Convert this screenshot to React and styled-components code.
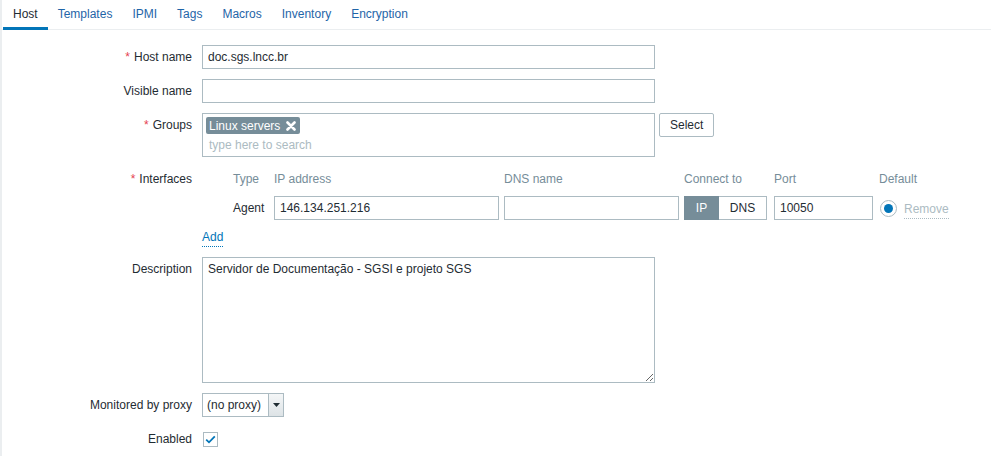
import React from "react";
import styled, { createGlobalStyle } from "styled-components";

const Global = createGlobalStyle`
  html, body { margin: 0; padding: 0; background: #fff; }
  body { font-family: "Liberation Sans", Arial, sans-serif; font-size: 12px; color: #1f2c33; }
  * { box-sizing: border-box; }
`;

const Page = styled.div`
  border-left: 2px solid #ebeef0;
  min-height: 456px;
  background: #fff;
`;

const Tabs = styled.ul`
  display: flex;
  list-style: none;
  margin: 0;
  padding: 0 0 0 1px;
  height: 30px;
  border-bottom: 1px solid #ebeef0;
`;

const Tab = styled.li`
  height: 30px;
  padding: 0 10px;
  line-height: 28px;
  color: ${(p) => (p.$active ? "#1f2c33" : "#1f65a8")};
  border-bottom: 3px solid ${(p) => (p.$active ? "#0275b8" : "transparent")};
  margin-bottom: -1px;
  cursor: pointer;
`;

const Form = styled.div`
  display: flex;
  flex-direction: column;
  gap: 10px;
  padding-top: 15px;
`;

const Row = styled.div`
  display: flex;
  align-items: flex-start;
`;

const Label = styled.div`
  width: 190px;
  margin-right: 10px;
  text-align: right;
  line-height: 24px;
  white-space: nowrap;
`;

const Req = styled.span`
  color: #e54251;
  margin-right: 4px;
`;

const Field = styled.div`
  display: flex;
  align-items: flex-start;
  gap: 4px;
`;

const Input = styled.input`
  width: ${(p) => p.$w}px;
  height: 24px;
  border: 1px solid #acbbc2;
  border-radius: 0;
  padding: 0 5px;
  font: inherit;
  color: #1f2c33;
  background: #fff;
  outline: none;
`;

const Multi = styled.div`
  width: 453px;
  height: 44px;
  border: 1px solid #acbbc2;
  padding: 3px 3px 0 3px;
  display: flex;
  flex-direction: column;
`;

const TagItem = styled.span`
  align-self: flex-start;
  display: inline-flex;
  align-items: center;
  gap: 6px;
  height: 17px;
  padding: 0 4px 0 3px;
  background: #768d99;
  color: #fff;
  border-radius: 2px;
  font-size: 12px;
`;

const Placeholder = styled.span`
  color: #acbbc2;
  line-height: 16px;
  margin-top: 3px;
  padding-left: 3px;
`;

const Button = styled.button`
  height: 24px;
  padding: 0 10px;
  border: 1px solid #acbbc2;
  border-radius: 2px;
  background: #fff;
  color: #1f2c33;
  font: inherit;
  cursor: pointer;
`;

const IfaceGrid = styled.div`
  display: grid;
  grid-template-columns: 31px 41px 230px 180px 90px 105px auto;
  grid-template-rows: 24px 24px;
  row-gap: 5px;
  align-items: center;
`;

const ColHead = styled.div`
  color: #768d99;
  line-height: 24px;
  white-space: nowrap;
`;

const Cell = styled.div`
  display: flex;
  align-items: center;
  white-space: nowrap;
`;

const Toggle = styled.div`
  display: flex;
  width: 83px;
  height: 24px;
  border: 1px solid #acbbc2;
`;

const ToggleOpt = styled.div`
  flex: ${(p) => (p.$active ? "0 0 35px" : "1")};
  display: flex;
  align-items: center;
  justify-content: center;
  background: ${(p) => (p.$active ? "#768d99" : "#fff")};
  color: ${(p) => (p.$active ? "#fff" : "#1f2c33")};
  margin: ${(p) => (p.$active ? "-1px 0 -1px -1px" : "0")};
`;

const Radio = styled.span`
  width: 17px;
  height: 17px;
  border-radius: 50%;
  border: 1px solid #acbbc2;
  display: inline-flex;
  align-items: center;
  justify-content: center;
  margin-left: 1px;
  &::after {
    content: "";
    width: 9px;
    height: 9px;
    border-radius: 50%;
    background: #0275b8;
  }
`;

const LinkText = styled.span`
  color: ${(p) => (p.$muted ? "#acbbc2" : "#0275b8")};
  border-bottom: 1px dotted ${(p) => (p.$muted ? "#acbbc2" : "#0275b8")};
  line-height: 14px;
  padding-bottom: 2px;
  cursor: pointer;
`;

const RemoveWrap = styled.span`
  margin-left: 7px;
  padding-top: 2px;
`;

const AddBlock = styled.div`
  padding-top: 9px;
  height: 27px;
  line-height: 16px;
`;

const Textarea = styled.textarea`
  width: 453px;
  height: 126px;
  border: 1px solid #acbbc2;
  border-radius: 0;
  padding: 4px 5px;
  font: inherit;
  color: #1f2c33;
  resize: both;
  outline: none;
  display: block;
`;

const SelectBox = styled.div`
  width: 82px;
  height: 24px;
  border: 1px solid #acbbc2;
  display: flex;
  align-items: stretch;
  background: #fff;
`;

const SelectText = styled.span`
  flex: 1;
  padding-left: 4px;
  line-height: 22px;
`;

const SelectArrow = styled.span`
  width: 15px;
  border-left: 1px solid #acbbc2;
  background: linear-gradient(#f4f6f7, #dde3e6);
  display: flex;
  align-items: center;
  justify-content: center;
`;

const CheckWrap = styled.div`
  height: 24px;
  display: flex;
  align-items: center;
  padding-left: 1px;
`;

const Check = styled.span`
  width: 15px;
  height: 15px;
  border: 1px solid #acbbc2;
  background: #fff;
  display: inline-flex;
  align-items: center;
  justify-content: center;
`;

const Cross = () => (
  <svg width="10" height="10" viewBox="0 0 10 10">
    <path d="M1.5 1.5 L8.5 8.5 M8.5 1.5 L1.5 8.5" stroke="#fff" strokeWidth="2.6" strokeLinecap="round" />
  </svg>
);

const tabs = ["Host", "Templates", "IPMI", "Tags", "Macros", "Inventory", "Encryption"];

export default function App() {
  return (
    <Page>
      <Global />
      <Tabs>
        {tabs.map((t, i) => (
          <Tab key={t} $active={i === 0}>{t}</Tab>
        ))}
      </Tabs>
      <Form>
        <Row>
          <Label><Req>*</Req>Host name</Label>
          <Field><Input $w={453} defaultValue="doc.sgs.lncc.br" /></Field>
        </Row>
        <Row>
          <Label>Visible name</Label>
          <Field><Input $w={453} defaultValue="" /></Field>
        </Row>
        <Row>
          <Label><Req>*</Req>Groups</Label>
          <Field>
            <Multi>
              <TagItem>Linux servers <Cross /></TagItem>
              <Placeholder>type here to search</Placeholder>
            </Multi>
            <Button>Select</Button>
          </Field>
        </Row>
        <Row>
          <Label><Req>*</Req>Interfaces</Label>
          <div>
            <IfaceGrid>
              <span />
              <ColHead>Type</ColHead>
              <ColHead>IP address</ColHead>
              <ColHead>DNS name</ColHead>
              <ColHead>Connect to</ColHead>
              <ColHead>Port</ColHead>
              <ColHead>Default</ColHead>
              <span />
              <Cell>Agent</Cell>
              <Cell><Input $w={225} defaultValue="146.134.251.216" /></Cell>
              <Cell><Input $w={175} defaultValue="" /></Cell>
              <Cell>
                <Toggle>
                  <ToggleOpt $active>IP</ToggleOpt>
                  <ToggleOpt>DNS</ToggleOpt>
                </Toggle>
              </Cell>
              <Cell><Input $w={99} defaultValue="10050" /></Cell>
              <Cell>
                <Radio />
                <RemoveWrap><LinkText $muted>Remove</LinkText></RemoveWrap>
              </Cell>
            </IfaceGrid>
            <AddBlock><LinkText>Add</LinkText></AddBlock>
          </div>
        </Row>
        <Row>
          <Label>Description</Label>
          <Field>
            <Textarea defaultValue="Servidor de Documentação - SGSI e projeto SGS" />
          </Field>
        </Row>
        <Row>
          <Label>Monitored by proxy</Label>
          <Field>
            <SelectBox>
              <SelectText>(no proxy)</SelectText>
              <SelectArrow>
                <svg width="7" height="4" viewBox="0 0 7 4"><path d="M0 0 H7 L3.5 4 Z" fill="#1f2c33" /></svg>
              </SelectArrow>
            </SelectBox>
          </Field>
        </Row>
        <Row>
          <Label>Enabled</Label>
          <CheckWrap>
            <Check>
              <svg width="11" height="9" viewBox="0 0 11 9">
                <path d="M1.2 4.6 L4 7.3 L9.8 1.4" fill="none" stroke="#0275b8" strokeWidth="1.8" />
              </svg>
            </Check>
          </CheckWrap>
        </Row>
      </Form>
    </Page>
  );
}
